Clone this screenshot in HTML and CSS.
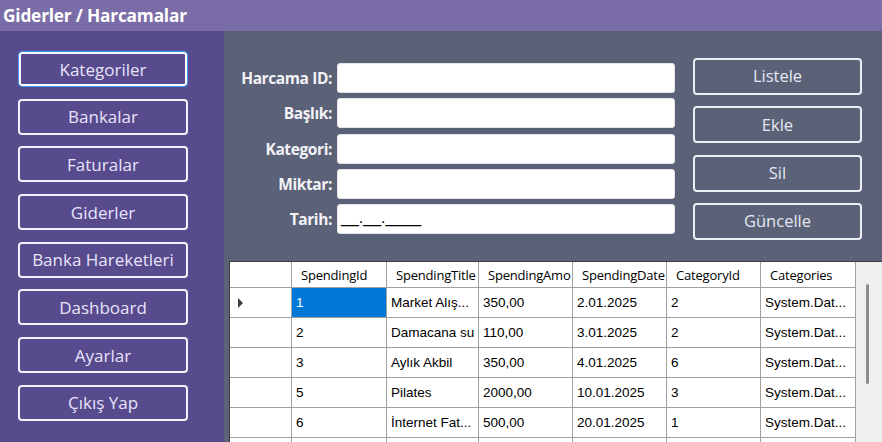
FILE: index.html
```html
<!DOCTYPE html>
<html lang="tr">
<head>
<meta charset="utf-8">
<title>Giderler / Harcamalar</title>
<link rel="stylesheet" href="styles.css">
</head>
<body>
<div class="window">
  <div class="titlebar">Giderler / Harcamalar</div>
  <div class="content">
    <nav class="sidebar">
      <button class="nav-btn focused">Kategoriler</button>
      <button class="nav-btn">Bankalar</button>
      <button class="nav-btn">Faturalar</button>
      <button class="nav-btn">Giderler</button>
      <button class="nav-btn">Banka Hareketleri</button>
      <button class="nav-btn">Dashboard</button>
      <button class="nav-btn">Ayarlar</button>
      <button class="nav-btn">Çıkış Yap</button>
    </nav>
    <main class="main">
      <div class="top">
        <div class="form">
          <label class="lbl">Harcama ID:</label><div class="input"></div>
          <label class="lbl">Başlık:</label><div class="input"></div>
          <label class="lbl">Kategori:</label><div class="input"></div>
          <label class="lbl">Miktar:</label><div class="input"></div>
          <label class="lbl">Tarih:</label><div class="input mask">__.__.____</div>
        </div>
        <div class="actions">
          <button class="act-btn">Listele</button>
          <button class="act-btn">Ekle</button>
          <button class="act-btn">Sil</button>
          <button class="act-btn">Güncelle</button>
        </div>
      </div>
      <div class="grid">
        <table class="table">
          <colgroup>
            <col class="c-rh"><col class="c-id"><col class="c-title"><col class="c-amo"><col class="c-date"><col class="c-cat"><col class="c-cats">
          </colgroup>
          <thead>
            <tr><th class="rh"></th><th>SpendingId</th><th>SpendingTitle</th><th>SpendingAmo</th><th>SpendingDate</th><th>CategoryId</th><th>Categories</th></tr>
          </thead>
          <tbody>
            <tr><td class="rh"><span class="arrow"></span></td><td class="sel">1</td><td>Market Alış...</td><td>350,00</td><td>2.01.2025</td><td>2</td><td>System.Dat...</td></tr>
            <tr><td class="rh"></td><td>2</td><td>Damacana su</td><td>110,00</td><td>3.01.2025</td><td>2</td><td>System.Dat...</td></tr>
            <tr><td class="rh"></td><td>3</td><td>Aylık Akbil</td><td>350,00</td><td>4.01.2025</td><td>6</td><td>System.Dat...</td></tr>
            <tr><td class="rh"></td><td>5</td><td>Pilates</td><td>2000,00</td><td>10.01.2025</td><td>3</td><td>System.Dat...</td></tr>
            <tr><td class="rh"></td><td>6</td><td>İnternet Fat...</td><td>500,00</td><td>20.01.2025</td><td>1</td><td>System.Dat...</td></tr>
            <tr><td class="rh"></td><td></td><td></td><td></td><td></td><td></td><td></td></tr>
          </tbody>
        </table>
        <div class="scroll"><div class="thumb"></div></div>
      </div>
    </main>
  </div>
</div>
</body>
</html>
```
FILE: styles.css
```css
* { box-sizing: border-box; }
html, body { margin: 0; padding: 0; }
body {
  width: 882px;
  height: 442px;
  overflow: hidden;
  font-family: "Open Sans", "Noto Sans", sans-serif;
  background: #5b6176;
}
.window { width: 882px; height: 442px; display: flex; flex-direction: column; }
.titlebar {
  height: 31px;
  flex: none;
  background: #7a6ca7;
  color: #ffffff;
  font-weight: 700;
  font-size: 17.3px;
  line-height: 31px;
  padding-left: 3px;
  letter-spacing: -0.2px;
}
.content { flex: 1; display: flex; min-height: 0; }
.sidebar {
  width: 224px;
  flex: none;
  background: #574a8d;
  padding: 20px 0 0 18px;
  display: flex;
  flex-direction: column;
  gap: 11.7px;
}
.nav-btn, .act-btn {
  font-family: "Open Sans", "Noto Sans", sans-serif;
  background: transparent;
  border: 2px solid #f4f2fb;
  border-radius: 4px;
  color: #e8e4fa;
  font-size: 17px;
  padding: 0;
  margin: 0;
  line-height: 1;
}
.nav-btn { width: 170px; height: 36px; }
.nav-btn.focused {
  border: 1px solid #3f9cf0;
  box-shadow: inset 0 0 0 2px #ffffff;
}
.main {
  flex: 1;
  min-width: 0;
  display: flex;
  flex-direction: column;
  padding-left: 5px;
}
.top { height: 230px; flex: none; display: flex; align-items: flex-start; }
.form {
  margin-top: 32px;
  display: grid;
  grid-template-columns: 103px 338px;
  grid-auto-rows: 30px;
  column-gap: 5px;
  row-gap: 5.25px;
}
.lbl {
  justify-self: end;
  align-self: center;
  color: #f2f2f7;
  font-weight: 700;
  font-size: 15.5px;
  letter-spacing: -0.4px;
}
.input {
  background: #ffffff;
  border-radius: 3px;
  border: 1px solid #e4e4e8;
}
.mask {
  font-family: "Liberation Sans", Arial, sans-serif;
  font-size: 16px;
  color: #000;
  padding-left: 3px;
  line-height: 26px;
}
.actions {
  margin-top: 27px;
  margin-left: 18px;
  display: flex;
  flex-direction: column;
  gap: 11.3px;
}
.act-btn { width: 169px; height: 37px; border-color: #eceef4; color: #e4e8f4; font-size: 16.5px; }
.grid {
  flex: 1;
  display: flex;
  background: #f0f0f0;
  border-left: 1px solid #3c3c3c;
  border-top: 1px solid #3c3c3c;
  overflow: hidden;
  min-height: 0;
}
.table {
  border-collapse: separate;
  border-spacing: 0;
  table-layout: fixed;
  width: 626px;
  flex: none;
  background: #ffffff;
  align-self: flex-start;
}
.c-rh { width: 62px; }
.c-id { width: 95px; }
.c-title { width: 92px; }
.c-amo { width: 94px; }
.c-date { width: 94px; }
.c-cat { width: 94px; }
.c-cats { width: 95px; }
.table th, .table td {
  border-right: 1px solid #a0a0a0;
  border-bottom: 1px solid #a0a0a0;
  overflow: hidden;
  white-space: nowrap;
  text-align: left;
  padding: 0;
}
.table th {
  height: 26px;
  font-family: "Open Sans", "Noto Sans", sans-serif;
  font-weight: 400;
  font-size: 13px;
  color: #000;
  padding-left: 9px;
  letter-spacing: -0.2px;
  text-overflow: clip;
}
.table td {
  height: 30px;
  font-family: "Liberation Sans", Arial, sans-serif;
  font-size: 13.5px;
  color: #000;
  padding-left: 4px;
}
.table td.rh, .table th.rh { padding-left: 0; }
.table td.sel { background: #0078d7; color: #ffffff; }
.arrow {
  display: block;
  width: 0;
  height: 0;
  margin-left: 8px;
  border-top: 5px solid transparent;
  border-bottom: 5px solid transparent;
  border-left: 5px solid #3c3c3c;
}
.scroll { flex: 1; position: relative; }
.thumb {
  position: absolute;
  left: 10px;
  top: 22px;
  width: 3px;
  height: 100px;
  background: #8c8c8c;
  border-radius: 2px;
}
```
